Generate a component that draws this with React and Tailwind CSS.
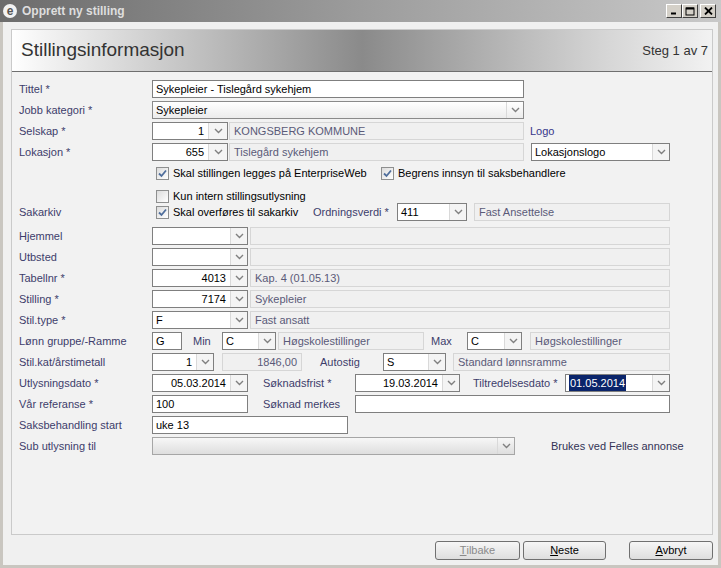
import React from 'react';

/**
 * Opprett ny stilling – steg 1 (Stillingsinformasjon)
 */

const Chevron = () => (
  <svg width="9" height="6" viewBox="0 0 9 6">
    <path d="M1 1 L4.5 4.5 L8 1" fill="none" stroke="#808080" strokeWidth="1.4" />
  </svg>
);

const Label = ({ children, className = '' }) => (
  <div className={`h-[18px] flex items-center text-[#3d3d6b] whitespace-nowrap shrink-0 ${className}`}>{children}</div>
);

const TextInput = ({ value, className = '' }) => (
  <div className={`h-[18px] shrink-0 bg-white border border-[#7f7f7f] flex items-center px-[3px] text-black ${className}`}>
    {value}
  </div>
);

const ReadOnly = ({ value, right, className = '' }) => (
  <div
    className={`h-[18px] shrink-0 bg-[#f0f0f0] border border-[#d6d6d6] flex items-center px-[4px] text-[#5a5a78] ${right ? 'justify-end' : ''} ${className}`}
  >
    {value}
  </div>
);

const Select = ({ value, right, gradient, disabled, highlight, arrow = 'w-[17px]', className = '' }) => {
  let box = 'bg-white border-[#7f7f7f]';
  if (gradient) box = 'bg-[linear-gradient(#ffffff,#ececec)] border-[#8a8a8a]';
  if (disabled) box = 'bg-[linear-gradient(#f7f7f7,#dedede)] border-[#a6a6a6]';
  return (
    <div className={`h-[18px] shrink-0 border flex ${box} ${className}`}>
      <div className={`flex-1 min-w-0 flex items-center text-black ${right ? 'justify-end pr-[4px]' : 'pl-[3px]'}`}>
        {highlight ? <span className="bg-[#0a246a] text-white px-[1px]">{value}</span> : value}
      </div>
      <div className={`${arrow} shrink-0 border-l border-[#d9d9d9] flex items-center justify-center ${disabled || gradient ? '' : 'bg-[#f4f4f4]'}`}>
        <Chevron />
      </div>
    </div>
  );
};

const Check = ({ checked, label, className = '' }) => (
  <div className={`h-[18px] flex items-center shrink-0 whitespace-nowrap ${className}`}>
    <div className="w-[13px] h-[13px] border border-[#8e8f8f] bg-[linear-gradient(135deg,#dcdcdc,#ffffff)] flex items-center justify-center shrink-0">
      {checked && (
        <svg width="11" height="11" viewBox="0 0 11 11">
          <path d="M2 5.5 L4.5 8 L9 2.5" fill="none" stroke="#4f6e9c" strokeWidth="1.8" />
        </svg>
      )}
    </div>
    <span className="ml-[4px] text-black">{label}</span>
  </div>
);

const Row = ({ label, children, className = 'h-[21px]' }) => (
  <div className={`flex items-start ${className}`}>
    <Label className="w-[133px]">{label}</Label>
    {children}
  </div>
);

const WinButton = ({ children }) => (
  <div className="w-[16px] h-[14px] bg-[#d4d0c8] border border-t-white border-l-white border-r-[#404040] border-b-[#404040] flex items-center justify-center">
    {children}
  </div>
);

const DialogButton = ({ children, disabled, className = '' }) => (
  <div
    className={`h-[19px] shrink-0 rounded-[3px] border border-[#707070] bg-[linear-gradient(#f6f6f6,#dedede)] flex items-center justify-center ${disabled ? 'text-[#8a8a8a]' : 'text-black'} ${className}`}
  >
    {children}
  </div>
);

const App = () => {
  return (
    <div className="w-[721px] h-[568px] overflow-hidden flex flex-col bg-[#c9c6c0] font-['Liberation_Sans',Arial,sans-serif] text-[11px]">
      {/* Title bar */}
      <div className="h-[22px] shrink-0 flex items-center bg-[linear-gradient(to_right,#6c6c6c,#9c9c9c_50%,#c9c9c9)]">
        <div className="ml-[3px] w-[14px] h-[14px] rounded-full bg-[#f2f2f2] flex items-center justify-center text-[#555] font-bold text-[12px] leading-none">
          e
        </div>
        <div className="ml-[5px] text-[12px] font-bold text-[#dedede]">Opprett ny stilling</div>
        <div className="ml-auto mr-[5px] flex">
          <WinButton>
            <svg width="8" height="8" viewBox="0 0 8 8"><path d="M1 6.5 H6" stroke="#000" strokeWidth="2" /></svg>
          </WinButton>
          <WinButton>
            <svg width="10" height="9" viewBox="0 0 10 9"><rect x="1" y="1" width="8" height="7" fill="none" stroke="#000" strokeWidth="1" /><path d="M1 1.5 H9" stroke="#000" strokeWidth="2" /></svg>
          </WinButton>
          <div className="ml-[2px]">
            <WinButton>
              <svg width="9" height="8" viewBox="0 0 9 8"><path d="M1 0.5 L8 7.5 M8 0.5 L1 7.5" stroke="#000" strokeWidth="1.8" /></svg>
            </WinButton>
          </div>
        </div>
      </div>

      {/* Window body */}
      <div className="flex-1 mx-[3px] mb-[3px] bg-[#f0f0f0] flex flex-col">
        <div className="mt-[7px] ml-[8px] w-[702px] h-[506px] border border-[#cacaca] bg-[#f2f2f2] flex flex-col">
          {/* Header */}
          <div className="h-[42px] shrink-0 flex items-center justify-between border-b border-[#6f6f6f] bg-[linear-gradient(to_right,#ffffff_0%,#f2f2f2_5%,#8a8a8a_50%,#d6d6d6_85%,#f2f2f2_100%)]">
            <div className="pl-[9px] text-[19px] text-[#333]">Stillingsinformasjon</div>
            <div className="pr-[4px] text-[13px] text-[#333]">Steg 1 av 7</div>
          </div>

          {/* Form */}
          <div className="pt-[8px] pl-[7px] flex flex-col">
            <Row label="Tittel *">
              <TextInput value="Sykepleier - Tislegård sykehjem" className="w-[372px]" />
            </Row>
            <Row label="Jobb kategori *">
              <Select value="Sykepleier" gradient className="w-[372px]" />
            </Row>
            <Row label="Selskap *">
              <Select value="1" right arrow="w-[19px]" className="w-[76px]" />
              <ReadOnly value="KONGSBERG KOMMUNE" className="ml-[1px] w-[295px]" />
              <Label className="ml-[6px] text-[#36368a]">Logo</Label>
            </Row>
            <Row label="Lokasjon *">
              <Select value="655" right arrow="w-[19px]" className="w-[76px]" />
              <ReadOnly value="Tislegård sykehjem" className="ml-[1px] w-[295px]" />
              <Select value="Lokasjonslogo" className="ml-[7px] w-[139px]" />
            </Row>
            <Row label="">
              <Check checked label="Skal stillingen legges på EnterpriseWeb" className="ml-[4px] w-[225px]" />
              <Check checked label="Begrens innsyn til saksbehandlere" />
            </Row>
            <Row label="" className="h-[18px] pt-[2px]">
              <Check label="Kun intern stillingsutlysning" className="ml-[4px]" />
            </Row>
            <Row label="Sakarkiv" className="h-[24px]">
              <Check checked label="Skal overføres til sakarkiv" className="ml-[4px] w-[157px]" />
              <Label className="w-[84px]">Ordningsverdi *</Label>
              <Select value="411" className="w-[70px]" />
              <ReadOnly value="Fast Ansettelse" className="ml-[7px] w-[196px]" />
            </Row>
            <Row label="Hjemmel">
              <Select value="" className="w-[96px]" />
              <ReadOnly value="" className="ml-[2px] w-[420px]" />
            </Row>
            <Row label="Utbsted">
              <Select value="" className="w-[96px]" />
              <ReadOnly value="" className="ml-[2px] w-[420px]" />
            </Row>
            <Row label="Tabellnr *">
              <Select value="4013" right className="w-[96px]" />
              <ReadOnly value="Kap. 4 (01.05.13)" className="ml-[2px] w-[420px]" />
            </Row>
            <Row label="Stilling *">
              <Select value="7174" right className="w-[96px]" />
              <ReadOnly value="Sykepleier" className="ml-[2px] w-[420px]" />
            </Row>
            <Row label="Stil.type *">
              <Select value="F" className="w-[96px]" />
              <ReadOnly value="Fast ansatt" className="ml-[2px] w-[420px]" />
            </Row>
            <Row label="Lønn gruppe/-Ramme">
              <TextInput value="G" className="w-[30px]" />
              <Label className="w-[40px] pl-[11px]">Min</Label>
              <Select value="C" className="w-[54px]" />
              <ReadOnly value="Høgskolestillinger" className="ml-[2px] w-[146px]" />
              <Label className="ml-[7px] w-[36px]">Max</Label>
              <Select value="C" className="w-[55px]" />
              <ReadOnly value="Høgskolestillinger" className="ml-[8px] w-[140px]" />
            </Row>
            <Row label="Stil.kat/årstimetall">
              <Select value="1" right className="w-[62px]" />
              <ReadOnly value="1846,00" right className="ml-[8px] w-[80px]" />
              <Label className="ml-[18px] w-[63px]">Autostig</Label>
              <Select value="S" className="w-[63px]" />
              <ReadOnly value="Standard lønnsramme" className="ml-[7px] w-[217px]" />
            </Row>
            <Row label="Utlysningsdato *">
              <Select value="05.03.2014" right className="w-[96px]" />
              <Label className="ml-[15px] w-[92px]">Søknadsfrist *</Label>
              <Select value="19.03.2014" right className="w-[105px]" />
              <Label className="ml-[13px] w-[92px]">Tiltredelsesdato *</Label>
              <Select value="01.05.2014" highlight className="w-[105px]" />
            </Row>
            <Row label="Vår referanse *">
              <TextInput value="100" className="w-[96px]" />
              <Label className="ml-[15px] w-[92px]">Søknad merkes</Label>
              <TextInput value="" className="w-[315px]" />
            </Row>
            <Row label="Saksbehandling start">
              <TextInput value="uke 13" className="w-[196px]" />
            </Row>
            <Row label="Sub utlysning til">
              <Select value="" disabled className="w-[363px]" />
              <Label className="ml-[36px] text-[#333355]">Brukes ved Felles annonse</Label>
            </Row>
          </div>
        </div>

        {/* Buttons */}
        <div className="mt-[6px] ml-[432px] flex">
          <DialogButton disabled className="w-[85px]">
            <span className="underline">T</span>ilbake
          </DialogButton>
          <DialogButton className="ml-[3px] w-[83px]">
            <span className="underline">N</span>este
          </DialogButton>
          <DialogButton className="ml-[23px] w-[84px]">
            <span className="underline">A</span>vbryt
          </DialogButton>
        </div>
      </div>
    </div>
  );
};

export default App;
